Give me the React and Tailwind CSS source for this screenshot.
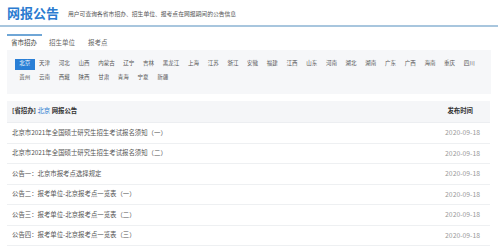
import React from 'react';

const provincesRow1 = ['北京', '天津', '河北', '山西', '内蒙古', '辽宁', '吉林', '黑龙江', '上海', '江苏', '浙江', '安徽', '福建', '江西', '山东', '河南', '湖北', '湖南', '广东', '广西', '海南', '重庆', '四川'];
const provincesRow2 = ['贵州', '云南', '西藏', '陕西', '甘肃', '青海', '宁夏', '新疆'];

const notices = [
  '北京市2021年全国硕士研究生招生考试报名须知（一）',
  '北京市2021年全国硕士研究生招生考试报名须知（二）',
  '公告一：北京市报考点选择规定',
  '公告二：报考单位-北京报考点一览表（一）',
  '公告三：报考单位-北京报考点一览表（二）',
  '公告四：报考单位-北京报考点一览表（三）',
];

const ProvinceRow = ({ items }) => (
  <div className="flex h-[14px] items-center">
    {items.map((p) => (
      <span
        key={p}
        className={`flex h-[11px] items-center px-[4.35px] text-[5.5px] leading-none ${
          p === '北京' ? 'bg-[#2a7fd6] text-white' : 'text-[#555]'
        }`}
      >
        {p}
      </span>
    ))}
  </div>
);

export default function App() {
  return (
    <div
      className="h-[252px] w-[498px] overflow-hidden bg-white"
      style={{ fontFamily: '"Noto Sans CJK SC", "Noto Sans", sans-serif' }}
    >
      <header className="flex h-[27px] items-center gap-[9px] border-b-2 border-[#a8c6de] pl-[7px]">
        <h1 className="text-[13px] font-bold leading-none text-[#2b7bd0]">网报公告</h1>
        <p className="mt-[3px] text-[5.8px] leading-none text-[#555]">
          用户可查询各省市招办、招生单位、报考点在网报期间的公告信息
        </p>
      </header>

      <nav className="ml-[7px] mt-[7px] flex h-[15px]">
        <span className="flex items-center border-t-2 border-[#6fa6d6] px-[4px] pr-[5px] text-[6.5px] leading-none text-[#444]">
          省市招办
        </span>
        <span className="ml-[3px] flex items-center border-t-2 border-transparent px-[4px] text-[6.5px] leading-none text-[#666]">
          招生单位
        </span>
        <span className="ml-[5px] flex items-center border-t-2 border-transparent px-[4px] text-[6.5px] leading-none text-[#666]">
          报考点
        </span>
      </nav>

      <div className="mx-[7px] mt-[1px] h-[44px] bg-[#f6f7f9] pl-[8px] pt-[7px]">
        <ProvinceRow items={provincesRow1} />
        <ProvinceRow items={provincesRow2} />
      </div>

      <div className="mx-[7px] mt-[7px] w-[483px]">
        <div className="flex h-[22px] items-center justify-between border-b border-[#eceef1] bg-[#f5f6f8] pl-[5px] pr-[17px] text-[6.4px] font-bold leading-none text-[#333]">
          <span>
            [省招办] <span className="font-normal text-[#2b7bd0]">北京</span> 网报公告
          </span>
          <span>发布时间</span>
        </div>
        {notices.map((n) => (
          <div
            key={n}
            className="flex h-[20.5px] items-center justify-between border-b border-[#eef0f2] pl-[5px] pr-[10px] text-[6.4px] leading-none"
          >
            <span className="text-[#555]">{n}</span>
            <span className="text-[6.8px] text-[#999]">2020-09-18</span>
          </div>
        ))}
      </div>
    </div>
  );
}
